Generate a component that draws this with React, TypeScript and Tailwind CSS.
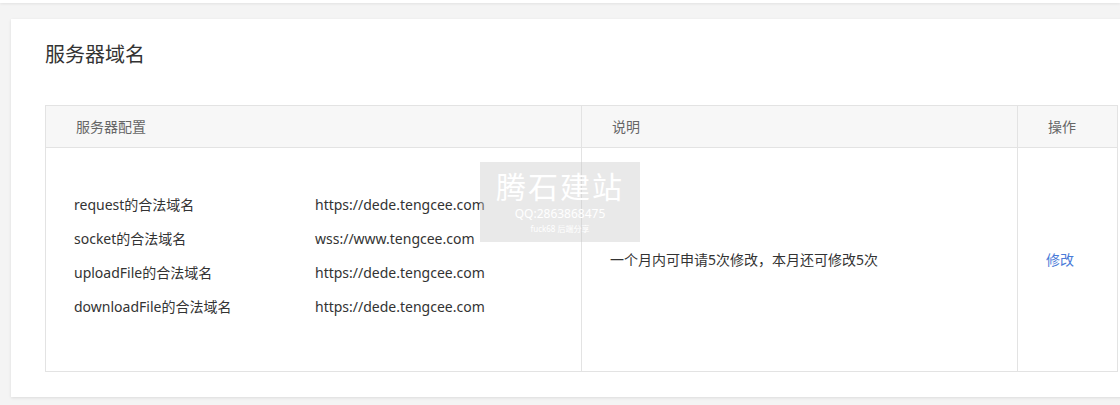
import React from "react";

const domains = [
  { label: "request的合法域名", value: "https://dede.tengcee.com" },
  { label: "socket的合法域名", value: "wss://www.tengcee.com" },
  { label: "uploadFile的合法域名", value: "https://dede.tengcee.com" },
  { label: "downloadFile的合法域名", value: "https://dede.tengcee.com" },
];

export default function App() {
  return (
    <div
      className="relative h-[405px] w-[1120px] overflow-hidden bg-[#f4f4f4]"
      style={{ fontFamily: '"Noto Sans", "Noto Sans CJK SC", sans-serif' }}
    >
      <div className="h-[3px] bg-white shadow-[0_1px_3px_rgba(0,0,0,0.08)]" />
      <div className="ml-[11px] mt-[16px] w-[1140px] bg-white pb-[25px] pl-[34px] pt-[21px] shadow-[0_1px_3px_rgba(0,0,0,0.1)]">
        <h2 className="text-[20px] leading-[30px] text-[#333]">服务器域名</h2>
        <div className="mt-[35px] w-[1073px] border border-[#e3e3e3] text-[14px]">
          <div className="flex h-[42px] items-center border-b border-[#e3e3e3] bg-[#f7f7f7] text-[#666]">
            <div className="flex h-full w-[536px] items-center border-r border-[#e3e3e3] pl-[30px]">服务器配置</div>
            <div className="flex h-full w-[436px] items-center border-r border-[#e3e3e3] pl-[30px]">说明</div>
            <div className="flex h-full flex-1 items-center pl-[30px]">操作</div>
          </div>
          <div className="flex h-[223px] text-[#333]">
            <div className="flex w-[536px] flex-col justify-center gap-[14px] border-r border-[#e3e3e3] pb-[7px] pl-[28px]">
              {domains.map((d) => (
                <div key={d.label} className="flex leading-[20px]">
                  <span className="w-[241px]">{d.label}</span>
                  <span>{d.value}</span>
                </div>
              ))}
            </div>
            <div className="flex w-[436px] items-center border-r border-[#e3e3e3] pl-[28px]">
              一个月内可申请5次修改，本月还可修改5次
            </div>
            <div className="flex flex-1 items-center pl-[28px]">
              <a href="#" className="text-[#4a7bd8]">修改</a>
            </div>
          </div>
        </div>
      </div>
      <div className="absolute left-[480px] top-[162px] flex h-[80px] w-[160px] flex-col items-center bg-[#c8c8c8]/40 pt-[6px] text-white">
        <div className="text-[30px] leading-[38px] tracking-[2px]">腾石建站</div>
        <div className="text-[12px] leading-[16px]">QQ:2863868475</div>
        <div className="text-[8px] leading-[14px]">fuck68 后端分享</div>
      </div>
    </div>
  );
}
